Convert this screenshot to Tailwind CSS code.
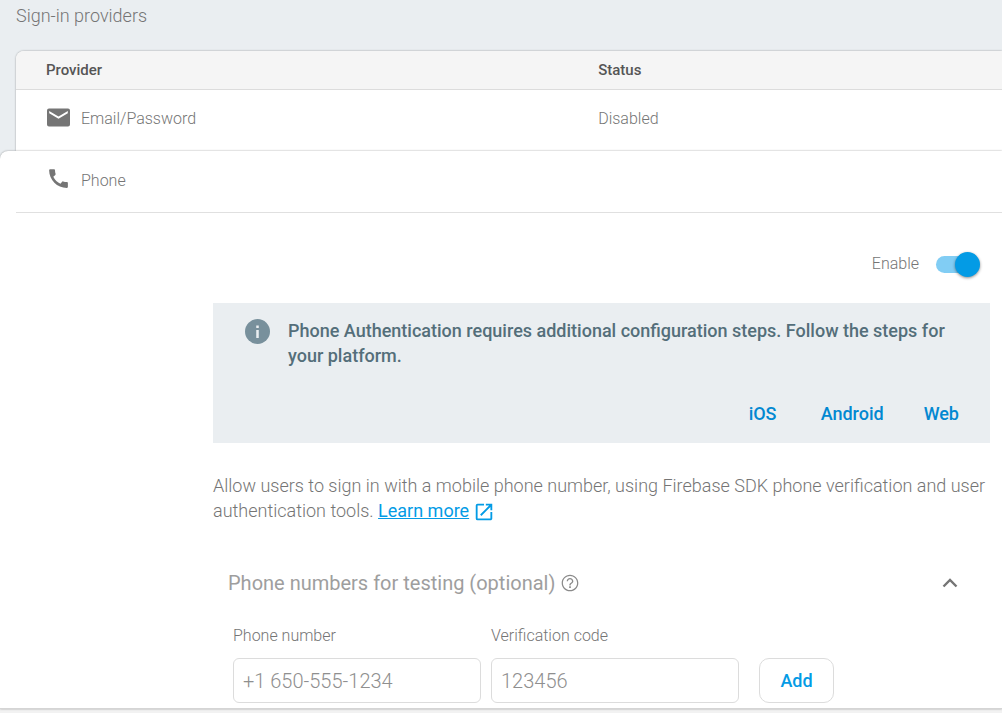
<!DOCTYPE html>
<html lang="en">
<head>
<meta charset="utf-8">
<meta name="viewport" content="width=device-width, initial-scale=1">
<title>Sign-in providers</title>
<script src="https://cdn.jsdelivr.net/npm/@tailwindcss/browser@4"></script>
</head>
<body class="flex min-h-screen flex-col bg-[#eaeef1] font-['Roboto',sans-serif] text-[#757575]">
<h1 class="px-4 pt-1 pb-[23px] text-lg leading-6 font-light">Sign-in providers</h1>

<div class="ml-4 overflow-hidden rounded-tl-lg bg-white shadow-[0_0_2px_rgba(0,0,0,0.4)]">
  <table class="w-full table-fixed text-left">
    <thead class="bg-[#f5f5f5] text-[15px] text-[#555]">
      <tr class="h-[38px] border-b border-[#dcdcdc]">
        <th scope="col" class="w-[56%] pl-[30px] font-medium">Provider</th>
        <th scope="col" class="pl-[30px] font-medium">Status</th>
      </tr>
    </thead>
    <tbody class="text-base font-light">
      <tr class="h-[62px]">
        <td class="pb-[2px] pl-[30px]">
          <div class="flex items-center gap-[10px]">
            <svg class="mb-1 size-[25px]" viewBox="0 0 25 25" fill="#757575" aria-hidden="true"><path d="M3 3.500h19a2 2 0 0 1 2 2v14a2 2 0 0 1-2 2H3a2 2 0 0 1-2-2v-14a2 2 0 0 1 2-2zM21.800 8.200V6L12.500 11.500L3.200 6v2.200l9.300 5.600z"/></svg>
            Email/Password
          </div>
        </td>
        <td class="pb-[2px] pl-[30px]">Disabled</td>
      </tr>
    </tbody>
  </table>
</div>

<main class="relative rounded-tl-lg border-b border-[#d5d5d5] bg-white pb-[5px] shadow-[0_0_2px_rgba(0,0,0,0.4)]">
  <div class="ml-4 flex h-[62px] items-center gap-[10px] border-b border-[#e0e0e0] pb-[2px] pl-[30px] font-light">
    <svg class="mb-1 size-[25px]" viewBox="0 0 24 24" fill="#757575" aria-hidden="true"><path d="M20.010 15.380c-1.230 0-2.420-.2-3.530-.560a.977.977 0 0 0-1.010.240l-1.570 1.970c-2.830-1.350-5.480-3.900-6.890-6.830l1.950-1.660c.270-.280.350-.670.240-1.020-.370-1.110-.560-2.300-.560-3.530 0-.540-.450-.990-.990-.990H4.190C3.650 3 3 3.240 3 3.990 3 13.280 10.730 21 20.010 21c.710 0 .990-.630.990-1.180v-3.450c0-.540-.450-.990-.990-.990z"/></svg>
    Phone
  </div>

  <div class="mr-3 ml-[213px]">
    <label class="flex h-[90px] items-center justify-end gap-4 pt-3 pr-[10px] font-light">
      Enable
      <span class="relative flex h-[25px] w-[45px] items-center justify-end">
        <input type="checkbox" role="switch" checked class="peer mr-[5px] h-[17px] w-[39px] appearance-none rounded-full bg-[#bdbdbd] checked:bg-[#81cdf4]">
        <span class="absolute left-0 size-[25px] rounded-full bg-white shadow-[0_1px_3px_rgba(0,0,0,0.45)] peer-checked:left-5 peer-checked:bg-[#039be5]"></span>
      </span>
    </label>

    <section class="bg-[#eaeef1] pt-[15px] pr-[31px] pb-[17px] pl-8 font-medium">
      <div class="flex gap-[18px]">
        <svg class="mt-px size-[25px] shrink-0" viewBox="0 0 25 25" aria-hidden="true"><circle cx="12.500" cy="12.500" r="12.500" fill="#78909c"/><path fill="#eaeef1" d="M11.250 6.500h2.500v2.500h-2.500zM11.250 11h2.500v8h-2.500z"/></svg>
        <p class="text-lg leading-[25px] text-[#546e7a]">Phone Authentication requires additional configuration steps. Follow the steps for your platform.</p>
      </div>
      <nav class="mt-[33px] flex justify-end gap-10 text-lg leading-[25px] text-[#0288d1]">
        <a href="#ios" class="min-w-8">iOS</a>
        <a href="#android">Android</a>
        <a href="#web">Web</a>
      </nav>
    </section>

    <p class="mt-[30px] text-lg leading-[25px] font-light">Allow users to sign in with a mobile phone number, using Firebase SDK phone verification and user authentication tools. <a href="#learn" class="font-normal text-[#039be5] underline">Learn more<svg class="ml-1 inline size-[22px] align-[-6px]" viewBox="0 0 24 24" fill="currentColor" aria-hidden="true"><path d="M19 19H5V5h7V3H5a2 2 0 0 0-2 2v14a2 2 0 0 0 2 2h14c1.100 0 2-.900 2-2v-7h-2v7zM14 3v2h3.590l-9.830 9.830 1.410 1.410L19 6.410V10h2V3h-7z"/></svg></a></p>

    <div class="mt-[47px] flex h-[26px] items-center pr-7 pl-[15px]">
      <h2 class="text-xl text-[#9e9e9e]">Phone numbers for testing (optional)</h2>
      <button type="button" aria-label="Help" class="ml-[5px] text-[#8a8a8a]"><svg class="size-5" viewBox="0 0 24 24" fill="currentColor" aria-hidden="true"><path d="M11 18h2v-2h-2v2zm1-16C6.480 2 2 6.480 2 12s4.480 10 10 10 10-4.480 10-10S17.520 2 12 2zm0 18.500c-4.700 0-8.500-3.800-8.500-8.500S7.300 3.500 12 3.500s8.500 3.800 8.500 8.500-3.800 8.500-8.500 8.500zM12 6c-2.210 0-4 1.790-4 4h1.600c0-1.320 1.080-2.400 2.400-2.400s2.400 1.080 2.400 2.400c0 2-3.200 1.750-3.200 5h1.600c0-2.250 3.200-2.500 3.200-5 0-2.210-1.790-4-4-4z"/></svg></button>
      <button type="button" aria-label="Collapse" class="ml-auto text-[#757575]"><svg class="size-6" viewBox="0 0 24 24" fill="none" stroke="currentColor" stroke-width="2.400" aria-hidden="true"><path d="M5.500 15.500l6.500-6.500 6.500 6.500"/></svg></button>
    </div>

    <form class="mt-[27px] flex items-end gap-[10px] pl-5">
      <div class="flex w-[248px] flex-col gap-[10px]">
        <label for="phone" class="text-base leading-[25px] font-light">Phone number</label>
        <input id="phone" type="tel" placeholder="+1 650-555-1234" class="h-[45px] w-full rounded-md border border-[#dcdcdc] px-[9px] text-xl font-light placeholder:text-[#8f8f8f]">
      </div>
      <div class="flex w-[248px] flex-col gap-[10px]">
        <label for="code" class="text-base leading-[25px] font-light">Verification code</label>
        <input id="code" type="text" placeholder="123456" class="h-[45px] w-full rounded-md border border-[#dcdcdc] px-[9px] text-xl font-light placeholder:text-[#8f8f8f]">
      </div>
      <button type="button" class="ml-[10px] h-[45px] w-[75px] rounded-[10px] border border-[#dcdcdc] text-lg font-medium text-[#039be5]">Add</button>
    </form>
  </div>
</main>
<div class="flex-1 bg-[#f2f2f2]"></div>
</body>
</html>
